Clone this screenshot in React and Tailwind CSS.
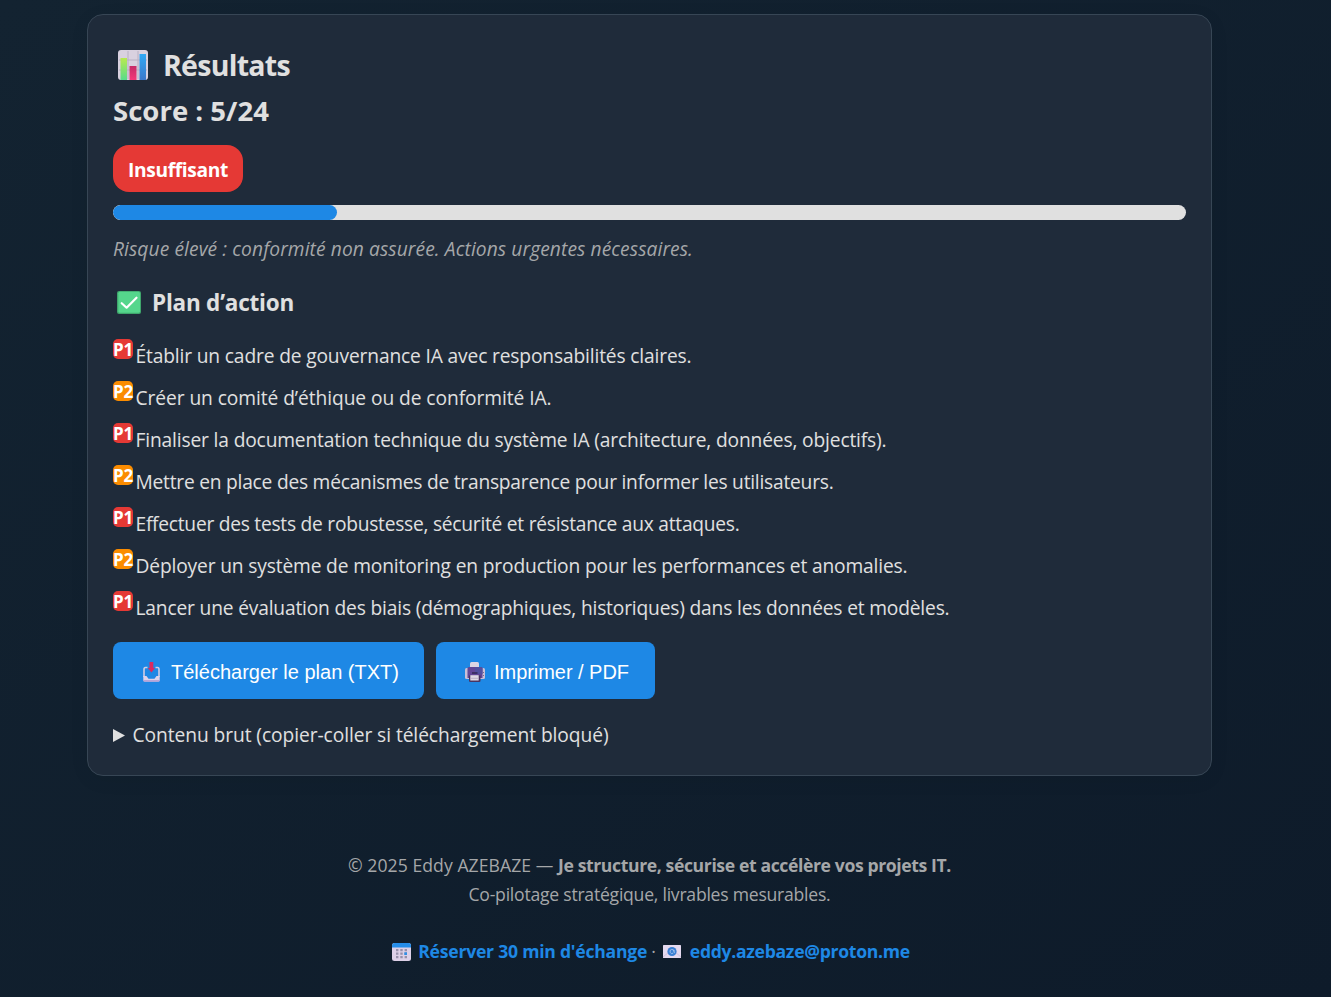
import { useLayoutEffect, useRef, useState } from "react";

// Single line of text whose tracking is adjusted so that it fills `width` pixels.
function Fit({ width, className = "", children }) {
  const ref = useRef(null);
  const [spacing, setSpacing] = useState(0);
  useLayoutEffect(() => {
    const el = ref.current;
    el.style.letterSpacing = "0px";
    const natural = el.getBoundingClientRect().width;
    const next = (width - natural) / el.textContent.length;
    el.style.letterSpacing = next + "px";
    setSpacing(next);
  }, [width]);
  return (
    <span ref={ref} className={"inline-block whitespace-nowrap " + className} style={{ letterSpacing: spacing + "px" }}>
      {children}
    </span>
  );
}

function ChartIcon() {
  return (
    <svg viewBox="0 0 30 30" className="ml-[5px] h-[30px] w-[30px] shrink-0">
      <defs>
        <linearGradient id="cg" x2="0" y2="1"><stop stopColor="#b9e94f" /><stop offset="1" stopColor="#58dc8b" /></linearGradient>
        <linearGradient id="cr" x2="0" y2="1"><stop stopColor="#c62b68" /><stop offset="1" stopColor="#f43879" /></linearGradient>
        <linearGradient id="cb" x2="0" y2="1"><stop stopColor="#31a9f5" /><stop offset="1" stopColor="#3c78ca" /></linearGradient>
      </defs>
      <rect width="30" height="30" rx="3" fill="#d9d1df" />
      <path d="M1 10H29M1 20H29M10 1V29M20 1V29" stroke="#b9b0c2" strokeWidth="1" />
      <path d="M2.500 8H9V30H2.500Z" fill="url(#cg)" />
      <path d="M11.500 16H18.500V30H11.500Z" fill="url(#cr)" />
      <path d="M21.500 4H28V30H21.500Z" fill="url(#cb)" />
    </svg>
  );
}

function CheckIcon() {
  return (
    <svg viewBox="0 0 24 23" className="ml-1 h-[23px] w-6 shrink-0">
      <rect width="24" height="23" rx="2" fill="#3fa66c" />
      <rect x="1.300" y="0.800" width="21.700" height="21" rx="1.500" fill="#55d68c" />
      <path d="M4.700 12.200L9.600 16.700L19.500 6.700" fill="none" stroke="#fff" strokeWidth="2.200" strokeLinecap="round" strokeLinejoin="round" />
    </svg>
  );
}

function InboxIcon() {
  return (
    <svg viewBox="0 0 17 20" className="h-5 w-[17px] shrink-0">
      <path d="M4.500 5.500H2.500Q1 5.500 1 7.500V15M12.500 5.500H14.500Q16 5.500 16 7.500V15" fill="none" stroke="#d0cce4" strokeWidth="1.600" />
      <path d="M0.300 14H3.500L5.500 16.800H11.500L13.500 14H16.700V18Q16.700 19.600 15.200 19.600H1.800Q0.300 19.600 0.300 18Z" fill="#ddd3eb" />
      <path d="M0.300 18H16.700V18.200Q16.700 19.800 15.200 19.800H1.800Q0.300 19.800 0.300 18.200Z" fill="#b9a5d8" />
      <path d="M6.500 0H10.300V6H12L8.400 10.500L4.800 6H6.500Z" fill="#d92b61" />
    </svg>
  );
}

function PrinterIcon() {
  return (
    <svg viewBox="0 0 20 20" className="h-5 w-5 shrink-0">
      <rect y="6" width="20" height="11" rx="1.500" fill="#c9bfd8" />
      <path d="M5 6V1.500Q5 0 6.500 0H12.500Q14 0 14 1.500V6Z" fill="#ddd6e4" />
      <path d="M2.500 6.500Q2.500 5 4 5H16Q17.500 5 17.500 6.500V16H2.500Z" fill="#624796" />
      <path d="M10 5H16Q17.500 5 17.500 6.500V12H10Z" fill="#53509f" />
      <path d="M7 11H12.500" stroke="#2b2143" strokeWidth="1.200" />
      <path d="M4 13.500H15.500V19Q15.500 20 14 20H5.500Q4 20 4 19Z" fill="#493461" />
      <path d="M5.300 13.200H13.700V18.500H5.300Z" fill="#e0dae5" />
      <path d="M6 16.300H13" stroke="#bbb0c4" />
      <path d="M18.500 10V11M18.500 13V14" stroke="#786985" />
    </svg>
  );
}

function CalendarIcon() {
  return (
    <svg viewBox="0 0 19 18" className="h-[18px] w-[19px] shrink-0">
      <rect width="19" height="18" rx="2.500" fill="#ddd0e7" />
      <path d="M0 4.500V2.500Q0 0 2.500 0H16.500Q19 0 19 2.500V4.500Z" fill="#258de9" />
      <path d="M4 7.200H15M4 10.700H15M4 14.200H15" stroke="#9790aa" strokeWidth="2.200" strokeDasharray="2.400 1.900" />
      <path d="M12.300 9.300H15V12H12.300Z" fill="#318fe5" />
    </svg>
  );
}

function MailIcon() {
  return (
    <svg viewBox="0 0 18 13" className="h-[13px] w-[18px] shrink-0">
      <rect width="18" height="13" rx="0.600" fill="#e4d9ef" />
      <path d="M0 12L6 7M18 12L12 7" stroke="#c5b6d9" strokeWidth="0.700" />
      <circle cx="9" cy="6.500" r="4.600" fill="#397fd3" />
      <path d="M11 6.500A2 2 0 1 0 10.200 8.100M11 5V7.200Q11.300 8.200 12 7.300" fill="none" stroke="#a8c7f0" strokeWidth="0.900" />
    </svg>
  );
}

const actions = [
  [1, 556, "Établir un cadre de gouvernance IA avec responsabilités claires."],
  [2, 416, "Créer un comité d’éthique ou de conformité IA."],
  [1, 751, "Finaliser la documentation technique du système IA (architecture, données, objectifs)."],
  [2, 698, "Mettre en place des mécanismes de transparence pour informer les utilisateurs."],
  [1, 604, "Effectuer des tests de robustesse, sécurité et résistance aux attaques."],
  [2, 772, "Déployer un système de monitoring en production pour les performances et anomalies."],
  [1, 814, "Lancer une évaluation des biais (démographiques, historiques) dans les données et modèles."],
];

export default function App() {
  return (
    <div className="h-[997px] overflow-hidden bg-linear-to-br from-[#132331] to-[#0e1b2a] pt-3.5 font-['Open_Sans','Noto_Sans',sans-serif] text-[#e0e0e0]">
      <main className="ml-[87px] h-[762px] w-[1125px] rounded-2xl border border-[#374655] bg-[#1f2b3a] px-[25px] pt-[27px] shadow-[0_4px_20px_rgba(0,0,0,0.06)]">
        <h2 className="flex h-[46px] items-center text-[28.500px] font-bold leading-[46px]">
          <ChartIcon />
          <Fit width={127} className="ml-[15px]">Résultats</Fit>
        </h2>
        <div className="h-[46px] text-[27.500px] font-bold leading-[46px]"><Fit width={156}>Score : 5/24</Fit></div>
        <div className="mt-[11px] flex h-[47px] w-[130px] items-center justify-center rounded-2xl bg-[#e53935] pt-1 text-[19.200px] font-bold text-white">
          <Fit width={100}>Insuffisant</Fit>
        </div>
        <div className="mt-[13px] h-[15px] overflow-hidden rounded-lg bg-[#e0e0e0]">
          <div className="h-full w-[20.9%] rounded-lg bg-[#1e88e5]" />
        </div>
        <p className="mt-[13px] h-8 text-[19.200px] italic leading-8 text-[#a5a7a9]">
          <Fit width={580}>Risque élevé : conformité non assurée. Actions urgentes nécessaires.</Fit>
        </p>
        <h3 className="mt-[21px] flex h-8 items-center text-[22.500px] font-bold leading-8">
          <CheckIcon />
          <Fit width={142} className="ml-[11px] pt-0.5">Plan d’action</Fit>
        </h3>
        <ul className="mt-[17px]">
          {actions.map(([priority, width, text]) => (
            <li key={text} className="flex h-[42px] items-start">
              <span
                className={
                  "mt-[4px] mr-[2.5px] flex h-5 w-5 shrink-0 items-center justify-center rounded-[5px] text-[17px] font-bold leading-5 text-white " +
                  (priority === 1 ? "bg-[#e53935]" : "bg-[#fb8c00]")
                }
              >
                <Fit width={20} className="pt-0.5">{"P" + priority}</Fit>
              </span>
              <span className="text-[19.200px] leading-[42px]"><Fit width={width}>{text}</Fit></span>
            </li>
          ))}
        </ul>
        <div className="mt-[13px] flex gap-3 font-['Liberation_Sans',Arial,sans-serif] text-xl text-white">
          <button className="flex h-[57px] w-[311px] items-center rounded-lg bg-[#1e88e5] pl-[30px] pt-0.5">
            <InboxIcon />
            <Fit width={228} className="ml-[11px]">Télécharger le plan (TXT)</Fit>
          </button>
          <button className="flex h-[57px] w-[219px] items-center rounded-lg bg-[#1e88e5] pl-[29px] pt-0.5">
            <PrinterIcon />
            <Fit width={135} className="ml-[9px]">Imprimer / PDF</Fit>
          </button>
        </div>
        <div className="mt-5 flex h-8 items-center text-[19.200px] leading-8">
          <svg viewBox="0 0 12 13" className="mr-[7.5px] h-[13px] w-3 shrink-0"><path d="M0 0L12 6.500L0 13Z" fill="#e0e0e0" /></svg>
          <Fit width={476}>Contenu brut (copier-coller si téléchargement bloqué)</Fit>
        </div>
      </main>
      <footer className="flex w-[1299px] flex-col items-center pt-[75px] text-[17.600px] leading-[29px] text-[#a5a7a9]">
        <div className="flex">
          <Fit width={210} className="whitespace-pre">© 2025 Eddy AZEBAZE — </Fit>
          <Fit width={393} className="font-bold">Je structure, sécurise et accélère vos projets IT.</Fit>
        </div>
        <Fit width={362}>Co-pilotage stratégique, livrables mesurables.</Fit>
        <div className="mt-7 flex items-center pl-[3px] font-bold text-[#1e88e5]">
          <CalendarIcon />
          <Fit width={229} className="ml-[7px]">Réserver 30 min d'échange</Fit>
          <span className="mx-1 font-normal text-[#a5a7a9]">·</span>
          <span className="ml-[3px]"><MailIcon /></span>
          <Fit width={220} className="ml-[9px]">eddy.azebaze@proton.me</Fit>
        </div>
      </footer>
    </div>
  );
}
